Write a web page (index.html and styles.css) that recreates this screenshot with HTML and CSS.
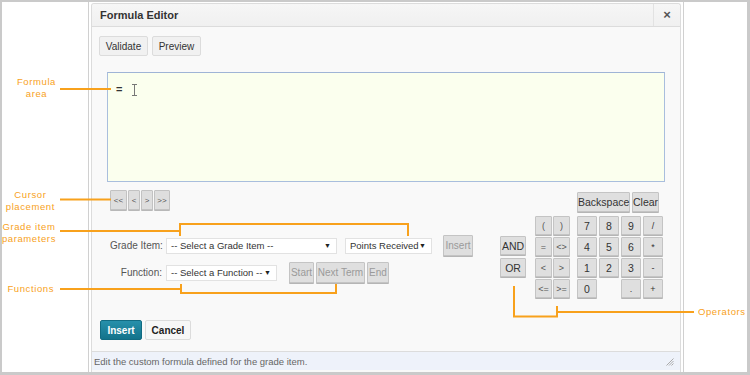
FILE: index.html
```html
<!DOCTYPE html>
<html lang="en">
<head>
    <meta charset="UTF-8">
    <title>Formula Editor</title>
    <link rel="stylesheet" href="styles.css">
</head>
<body>
    <div class="frame">
        <div class="shell">
            <div class="dialog">
                <div class="dialog-header">
                    <h1>Formula Editor</h1>
                    <span class="close">&times;</span>
                </div>

                <div class="dialog-body">
                    <div class="toolbar">
                        <button class="btn w49">Validate</button>
                        <button class="btn w49">Preview</button>
                    </div>

                    <div class="formula-area">
                        <span class="eq">=</span>
                        <svg class="ibeam" width="7" height="12" viewBox="0 0 7 12">
                            <path d="M1 0.5h5M3.5 0.5v11M1 11.5h5" stroke="#777" stroke-width="1" fill="none"/>
                        </svg>
                    </div>

                    <div class="lower">
                        <div class="lower-left">
                            <div class="nav">
                                <button class="nav-btn w17">&lt;&lt;</button>
                                <button class="nav-btn">&lt;</button>
                                <button class="nav-btn">&gt;</button>
                                <button class="nav-btn w16">&gt;&gt;</button>
                            </div>

                            <div class="form-row grade-row">
                                <label>Grade Item:</label>
                                <div class="select grade-select">
                                    <span>-- Select a Grade Item --</span>
                                    <span class="caret">&#9660;</span>
                                </div>
                                <div class="select points-select">
                                    <span>Points Received</span>
                                    <span class="caret">&#9660;</span>
                                </div>
                                <button class="key disabled insert-item">Insert</button>
                            </div>

                            <div class="form-row function-row">
                                <label>Function:</label>
                                <div class="select function-select">
                                    <span>-- Select a Function --</span>
                                    <span class="caret">&#9660;</span>
                                </div>
                                <div class="term-group">
                                    <button class="key disabled w25">Start</button>
                                    <button class="key disabled w49">Next Term</button>
                                    <button class="key disabled w22">End</button>
                                </div>
                            </div>
                        </div>

                        <div class="keypad">
                            <div class="col-logic">
                                <button class="key logic">AND</button>
                                <button class="key logic">OR</button>
                            </div>
                            <div class="col-ops">
                                <div class="key-row"><button class="key op">(</button><button class="key op">)</button></div>
                                <div class="key-row"><button class="key op">=</button><button class="key op">&lt;&gt;</button></div>
                                <div class="key-row"><button class="key op">&lt;</button><button class="key op">&gt;</button></div>
                                <div class="key-row"><button class="key op">&lt;=</button><button class="key op">&gt;=</button></div>
                            </div>
                            <div class="col-num">
                                <div class="key-row top-row">
                                    <button class="key backspace">Backspace</button>
                                    <button class="key clear">Clear</button>
                                </div>
                                <div class="key-row"><button class="key num">7</button><button class="key num">8</button><button class="key num">9</button><button class="key num small">/</button></div>
                                <div class="key-row"><button class="key num">4</button><button class="key num">5</button><button class="key num">6</button><button class="key num small">*</button></div>
                                <div class="key-row"><button class="key num">1</button><button class="key num">2</button><button class="key num">3</button><button class="key num small">-</button></div>
                                <div class="key-row"><button class="key num">0</button><span class="key-gap"></span><button class="key num small">.</button><button class="key num small">+</button></div>
                            </div>
                        </div>
                    </div>

                    <div class="actions">
                        <button class="btn primary">Insert</button>
                        <button class="btn cancel">Cancel</button>
                    </div>
                </div>

                <div class="dialog-footer">
                    <span>Edit the custom formula defined for the grade item.</span>
                    <svg class="grip" width="8" height="8" viewBox="0 0 8 8">
                        <path d="M7.5 0.5L0.5 7.5M7.5 3L3 7.5M7.5 5.5L5.5 7.5" stroke="#aaa" stroke-width="1" fill="none"/>
                    </svg>
                </div>
            </div>
        </div>

        <!-- callouts -->
        <svg class="callouts" width="750" height="375" viewBox="0 0 750 375">
            <g stroke="#f8a11c" stroke-width="2" fill="none">
                <path d="M60 89H111"/>
                <path d="M60 199.5H111"/>
                <path d="M60 231H180M180 236V224H408V236"/>
                <path d="M60 289H181M181 284V293H336V284"/>
                <path d="M514 286V316.5H557V306M557 312H694"/>
            </g>
        </svg>
        <div class="note note-formula">Formula<br>area</div>
        <div class="note note-cursor">Cursor<br>placement</div>
        <div class="note note-grade">Grade item<br>parameters</div>
        <div class="note note-functions">Functions</div>
        <div class="note note-operators">Operators</div>
    </div>
</body>
</html>
```

FILE: styles.css
```css
* {
    margin: 0;
    padding: 0;
    box-sizing: border-box;
}

body {
    font-family: "Liberation Sans", Arial, sans-serif;
    background: #fff;
}

button {
    font-family: inherit;
    cursor: pointer;
    white-space: nowrap;
}

.frame {
    position: relative;
    width: 750px;
    height: 375px;
    border: 2px solid #cacaca;
    border-bottom-width: 3px;
    border-right-width: 3px;
    background: #fff;
    display: flex;
    padding-left: 86px;
}

.shell {
    width: 596px;
    height: 100%;
    border-left: 1px solid #d0d0d0;
    border-right: 1px solid #d0d0d0;
    padding: 1px 2px 0;
    background: #fff;
}

.dialog {
    height: 100%;
    border: 1px solid #dcdcdc;
    border-bottom: none;
    border-radius: 3px 3px 0 0;
    background: #f9f9f9;
    display: flex;
    flex-direction: column;
}

.dialog-header {
    height: 23px;
    flex: none;
    display: flex;
    align-items: stretch;
    background: linear-gradient(#f6f6f6, #f0f0f0);
    border-bottom: 1px solid #dcdcdc;
    border-radius: 3px 3px 0 0;
}

.dialog-header h1 {
    flex: 1;
    font-size: 11px;
    font-weight: bold;
    color: #333;
    line-height: 22px;
    padding-left: 8px;
}

.close {
    width: 27px;
    border-left: 1px solid #e2e2e2;
    text-align: center;
    font-size: 13px;
    font-weight: bold;
    color: #555;
    line-height: 21px;
}

.dialog-body {
    flex: 1;
    padding: 9px 8px 0 7px;
}

.toolbar {
    display: flex;
    gap: 4px;
}

.btn {
    height: 20px;
    padding: 0 6px;
    background: #f1f1f1;
    border: 1px solid #dcdcdc;
    border-radius: 2px;
    font-size: 10px;
    color: #333;
}

.btn.w49 { width: 49px; padding: 0; }

.formula-area {
    margin: 16px 0 0 8px;
    width: 558px;
    height: 110px;
    background: #fbffee;
    border: 1px solid #a9bedd;
    border-top-color: #9fb4d6;
    display: flex;
    align-items: flex-start;
    padding: 9px 0 0 8px;
}

.eq {
    font-size: 11px;
    font-weight: bold;
    color: #333;
    line-height: 14px;
}

.ibeam {
    margin: 2px 0 0 9px;
}

.lower {
    display: flex;
    margin-top: 8px;
    padding-left: 11px;
}

.lower-left {
    width: 390px;
}

.nav {
    display: flex;
    gap: 1px;
}

.nav-btn {
    width: 12px;
    height: 20px;
    background: #dedede;
    border: 1px solid #c2c2c2;
    border-radius: 1px;
    box-shadow: 0 1px 0 #b8b8b8;
    font-size: 8px;
    color: #555;
}

.nav-btn.w17 { width: 17px; }
.nav-btn.w16 { width: 16px; }

.form-row {
    display: flex;
    align-items: center;
    height: 21px;
    white-space: nowrap;
}

.grade-row { margin-top: 25px; }
.function-row { margin-top: 6px; }

.form-row label {
    width: 52px;
    flex: none;
    text-align: right;
    font-size: 10px;
    color: #555;
    margin-right: 4px;
}

.select {
    flex: none;
    height: 16px;
    background: #fff;
    border: 1px solid #e2e2e2;
    display: flex;
    align-items: center;
    justify-content: space-between;
    padding: 0 5px 0 4px;
    font-size: 9.5px;
    color: #333;
    overflow: hidden;
}

.caret {
    font-size: 7px;
    color: #222;
}

.grade-select { width: 171px; }
.points-select { width: 87px; margin-left: 8px; }
.function-select { width: 111px; }

.key {
    flex: none;
    height: 19px;
    background: #dfdfdf;
    border: 1px solid #c4c4c4;
    border-radius: 1px;
    box-shadow: 0 1px 0 #b5b5b5;
    font-size: 10px;
    color: #333;
}

.key.disabled {
    color: #9a9a9a;
}

.insert-item {
    width: 30px;
    height: 21px;
    margin-left: 11px;
}

.term-group {
    display: flex;
    gap: 2px;
    margin-left: 12px;
}

.term-group .key { height: 21px; }
.key.w25 { width: 25px; }
.key.w49 { width: 49px; }
.key.w22 { width: 22px; }

.keypad {
    display: flex;
    align-items: flex-end;
    margin-top: 2px;
}

.col-logic {
    display: flex;
    flex-direction: column;
    gap: 3px;
    margin: 0 9px 21px 0;
}

.key.logic {
    width: 26px;
    font-size: 10.5px;
}

.col-ops,
.col-num {
    display: flex;
    flex-direction: column;
    gap: 2px;
}

.col-ops { margin-right: 7px; }

.key-row {
    display: flex;
    gap: 1px;
}

.col-num .key-row { gap: 2px; }

.col-num .top-row {
    margin-bottom: 2px;
}

.key.op {
    width: 17px;
    font-size: 9px;
    color: #555;
}

.key.num {
    width: 20px;
    font-size: 10.5px;
}

.key.small {
    font-size: 9px;
}

.key-gap {
    width: 20px;
}

.key.backspace {
    width: 53px;
    height: 20px;
    font-size: 10.5px;
}

.key.clear {
    width: 27px;
    height: 20px;
    font-size: 10.5px;
}

.actions {
    display: flex;
    gap: 3px;
    margin: 22px 0 0 1px;
}

.btn.primary {
    width: 42px;
    padding: 0;
    background: linear-gradient(#2690ab, #13738b);
    border-color: #116b82;
    color: #fff;
    font-weight: bold;
}

.btn.cancel {
    width: 46px;
    padding: 0;
    background: #f7f7f7;
    font-weight: bold;
    color: #222;
}

.dialog-footer {
    height: 19px;
    flex: none;
    margin-bottom: 2px;
    border-top: 1px solid #dcdcdc;
    background: #eef2fa;
    display: flex;
    align-items: center;
    justify-content: space-between;
    padding: 0 6px 0 2px;
    font-size: 9.5px;
    color: #666;
}

.grip {
    margin-top: 2px;
}

/* annotation overlay */
.callouts {
    position: absolute;
    left: -2px;
    top: -2px;
    pointer-events: none;
}

.note {
    position: absolute;
    right: 691px;
    text-align: center;
    font-size: 9.5px;
    line-height: 11.5px;
    letter-spacing: 0.6px;
    color: #f8a11c;
}

.note-formula { top: 74px; }
.note-cursor { top: 187px; right: 692px; }
.note-grade { top: 219px; right: 691px; }
.note-functions { top: 281px; right: 693px; }

.note-operators {
    right: auto;
    left: 696px;
    top: 304px;
}
```
